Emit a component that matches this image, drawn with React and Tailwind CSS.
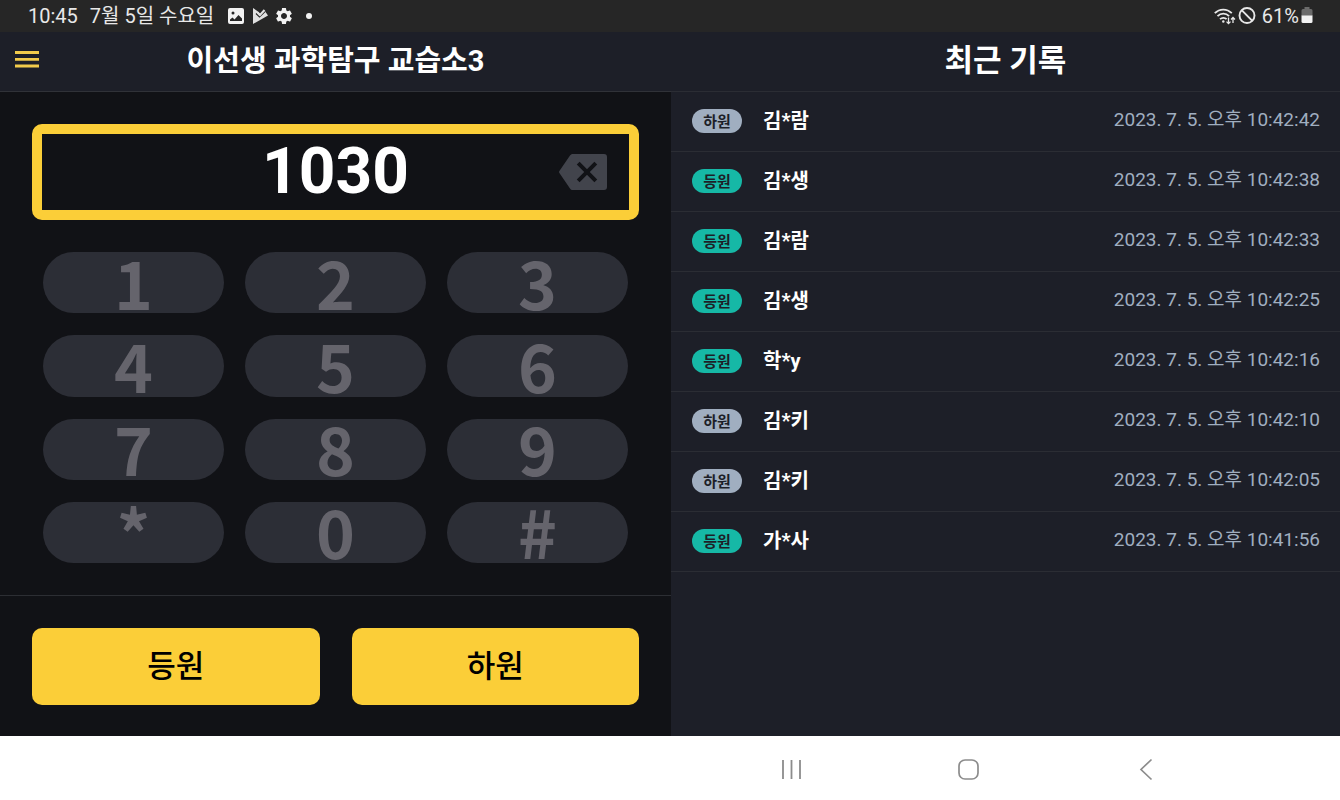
import React, { useState } from 'react';
import { MdSettings } from 'react-icons/md';

const KEYS = ['1', '2', '3', '4', '5', '6', '7', '8', '9', '*', '0', '#'];

const RECORDS = [
  { id: 1, type: 'out', name: '김*람', time: '10:42:42' },
  { id: 2, type: 'in', name: '김*생', time: '10:42:38' },
  { id: 3, type: 'in', name: '김*람', time: '10:42:33' },
  { id: 4, type: 'in', name: '김*생', time: '10:42:25' },
  { id: 5, type: 'in', name: '학*y', time: '10:42:16' },
  { id: 6, type: 'out', name: '김*키', time: '10:42:10' },
  { id: 7, type: 'out', name: '김*키', time: '10:42:05' },
  { id: 8, type: 'in', name: '가*사', time: '10:41:56' },
];

function StatusBar() {
  return (
    <div className="flex h-8 items-center justify-between bg-[#262626] pl-7 pr-[27px] text-[20px] leading-8 text-[#e8e8e8]">
      <div className="flex items-center">
        <span>10:45</span>
        <span className="ml-3">7월 5일 수요일</span>
        <svg className="ml-3.5 h-4 w-4" viewBox="0 0 16 16">
          <path
            fill="#f2f2f2"
            fillRule="evenodd"
            d="M2 0h12a2 2 0 0 1 2 2v12a2 2 0 0 1-2 2H2a2 2 0 0 1-2-2V2a2 2 0 0 1 2-2zM2 11.5V13h12v-2.500l-3.500-3.500-4 4.500-2-2zM5 3.500a1.500 1.500 0 1 0 0 3 1.500 1.500 0 0 0 0-3z"
          />
        </svg>
        <svg className="ml-2 h-4 w-4" viewBox="0 0 16 16" fill="none">
          <path fill="#e0e0e0" d="M1 0l5 3.500L8.500 6l4-3.500L16 7.500 1 16z" />
          <path d="M4 5.500l3.500 3.500L13 3.500" stroke="#262626" strokeWidth="1.200" />
          <path d="M5.500 4.500l2.500 2.500L12.500 2" stroke="#e0e0e0" strokeWidth="2" />
        </svg>
        <MdSettings className="ml-1.5 h-5 w-5 text-[#f2f2f2]" />
        <span className="ml-3 h-1.5 w-1.5 rounded-full bg-[#f2f2f2]" />
      </div>
      <div className="flex items-center">
        <svg className="h-5 w-[22px]" viewBox="0 0 22 20" fill="none" stroke="currentColor" strokeWidth="1.800">
          <path d="M.8 7.200C5.500 2.300 13 2.300 17.800 7.200" />
          <path d="M3.500 10.200c3.300-3.300 8.400-3.300 11.600 0" />
          <path d="M6 13.200c2-1.900 4.800-1.900 6.600 0" />
          <circle cx="9.300" cy="15.500" r="1.200" fill="currentColor" stroke="none" />
          <path d="M14.500 11.500v6M12.500 15.600l2 2 2-2M19 17v-5.500M17 13.500l2-2 2 2" strokeWidth="1.300" />
        </svg>
        <svg className="ml-0.5 h-[18px] w-[18px]" viewBox="0 0 18 18" fill="none" stroke="currentColor" strokeWidth="1.900">
          <circle cx="9" cy="8.500" r="7.500" />
          <path d="M3.700 3.200l10.600 10.600" />
        </svg>
        <span className="ml-1.5">61%</span>
        <svg className="ml-0.5 h-[18px] w-3" viewBox="0 0 12 18">
          <path d="M3.500 0h5v2H10a1.500 1.500 0 0 1 1.500 1.500V9h-11V3.500A1.500 1.500 0 0 1 2 2h1.500z" fill="#6b6b6b" />
          <path d="M.5 8.500h11v6a1.500 1.500 0 0 1-1.500 1.500H2a1.500 1.500 0 0 1-1.500-1.500z" fill="#f2f2f2" />
        </svg>
      </div>
    </div>
  );
}

function Keypad({ onPress }) {
  return (
    <div className="mt-8 grid flex-1 grid-cols-3 grid-rows-4 gap-x-[21px] gap-y-[22px] px-[11px]">
      {KEYS.map((key) => (
        <button
          key={key}
          type="button"
          onClick={() => onPress(key)}
          className="flex h-full min-h-0 items-center justify-center rounded-[32px] bg-[#2c2e36] pb-1 font-['Noto_Sans_CJK_KR',sans-serif] text-[66px] font-bold leading-[56px] text-[#65646c]"
        >
          {key}
        </button>
      ))}
    </div>
  );
}

function RecordRow({ record }) {
  const isIn = record.type === 'in';
  return (
    <li className="flex h-15 items-center border-b border-[#2b2d34] pb-0.5 pl-[21px] pr-5">
      <span
        className={`flex h-6 w-[50px] items-center justify-center rounded-full pt-1 text-[15px] font-bold text-[#1d1f28] ${isIn ? 'bg-[#16b8a6]' : 'bg-[#a0aec0]'}`}
      >
        {isIn ? '등원' : '하원'}
      </span>
      <span className="ml-[21px] text-[20px] font-bold text-white">{record.name}</span>
      <time className="ml-auto text-[19px] text-[#a0aec0]">2023. 7. 5. 오후 {record.time}</time>
    </li>
  );
}

function SystemNav() {
  return (
    <nav className="flex h-16 items-center justify-end gap-[153px] bg-white pr-[182px] pt-1 text-[#8c8c8c]">
      <button type="button" aria-label="최근 앱">
        <svg className="h-6 w-6" viewBox="0 0 24 24" stroke="currentColor" strokeWidth="1.800">
          <path d="M3 2v19M11.500 2v19M20 2v19" />
        </svg>
      </button>
      <button type="button" aria-label="홈">
        <svg className="h-6 w-6" viewBox="0 0 24 24" fill="none" stroke="currentColor" strokeWidth="1.700">
          <rect x="2" y="2" width="19" height="19" rx="6" />
        </svg>
      </button>
      <button type="button" aria-label="뒤로">
        <svg className="h-6 w-6" viewBox="0 0 24 24" fill="none" stroke="currentColor" strokeWidth="1.700">
          <path d="M17.500 1.500L7 11.500l10.500 10" />
        </svg>
      </button>
    </nav>
  );
}

export default function App() {
  const [code, setCode] = useState('1030');

  const handlePress = (key) => {
    setCode((prev) => (prev.length >= 4 ? prev : prev + key));
  };

  return (
    <div className="flex min-h-screen flex-col bg-[#1d1f28] font-[Roboto,'Noto_Sans_CJK_KR',sans-serif]">
      <StatusBar />
      <main className="flex flex-1">
        <section className="flex w-[calc(50%+1px)] flex-col">
          <header className="grid h-15 grid-cols-[24px_1fr_24px] items-center border-b border-[#303238] px-[15px]">
            <button type="button" aria-label="메뉴" className="pb-1.5">
              <svg className="h-6 w-6 text-[#f2cb4b]" viewBox="0 0 24 24" fill="currentColor">
                <path d="M0 4h24v3H0zM0 11h24v2.700H0zM0 17.500h24v3H0z" />
              </svg>
            </button>
            <h1 className="whitespace-nowrap text-center text-[29px] font-bold text-white">이선생 과학탐구 교습소3</h1>
          </header>

          <div className="flex flex-1 flex-col bg-[#111216]">
            <div className="flex flex-1 flex-col p-8">
              <div className="relative">
                <input
                  type="text"
                  readOnly
                  aria-label="출석 번호"
                  value={code}
                  className="h-24 w-full rounded-[10px] border-[10px] border-[#fbce38] bg-transparent pb-0.5 text-center text-[64px] font-bold leading-[74px] text-white outline-none"
                />
                <button
                  type="button"
                  aria-label="지우기"
                  onClick={() => setCode((prev) => prev.slice(0, -1))}
                  className="absolute inset-y-0 right-8 flex items-center"
                >
                  <svg className="h-9 w-12" viewBox="0 0 48 36">
                    <path
                      d="M14 0h31a3 3 0 0 1 3 3v30a3 3 0 0 1-3 3H14c-1.500 0-2.300-.6-3-1.600L.4 19c-.5-.7-.5-1.300 0-2L11 1.600C11.700.6 12.500 0 14 0z"
                      fill="#42444c"
                    />
                    <path d="M19.200 9.200l17.600 17.600M36.800 9.200L19.200 26.800" stroke="#111216" strokeWidth="4" />
                  </svg>
                </button>
              </div>
              <Keypad onPress={handlePress} />
            </div>

            <div className="grid grid-cols-2 gap-8 border-t border-[#2c2e33] px-8 pb-[31px] pt-8">
              <button type="button" className="h-[77px] rounded-[10px] bg-[#fbce38] pt-0.5 text-[31px] font-medium text-black">
                등원
              </button>
              <button type="button" className="h-[77px] rounded-[10px] bg-[#fbce38] pt-0.5 text-[31px] font-medium text-black">
                하원
              </button>
            </div>
          </div>
        </section>

        <section className="flex flex-1 flex-col">
          <header className="flex h-15 items-center justify-center border-b border-[#2b2d34]">
            <h2 className="text-[31px] font-bold text-white">최근 기록</h2>
          </header>
          <ul>
            {RECORDS.map((record) => (
              <RecordRow key={record.id} record={record} />
            ))}
          </ul>
        </section>
      </main>
      <SystemNav />
    </div>
  );
}
